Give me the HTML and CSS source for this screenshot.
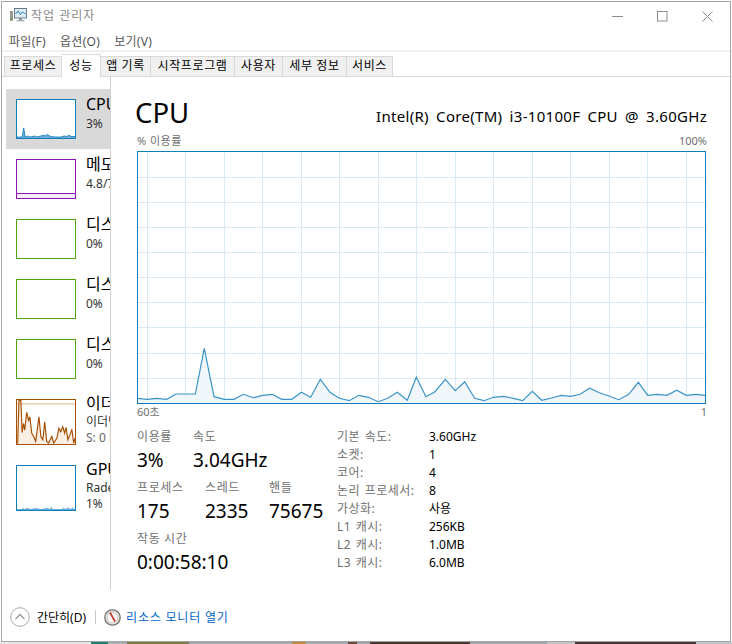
FILE: index.html
```html
<!DOCTYPE html>
<html lang="ko">

<head>
  <meta charset="UTF-8">
  <title>작업 관리자</title>
  <link rel="stylesheet" href="styles.css">
</head>

<body>
  <div class="window">
    <!-- Title bar -->
    <div class="titlebar">
      <svg class="app-icon" width="17" height="16" viewBox="0 0 17 16">
        <rect x="0.5" y="4.5" width="2" height="9" fill="#9a9a9a" stroke="#777" stroke-width="0.6" />
        <rect x="0.8" y="11" width="1.5" height="2" fill="#5aa845" />
        <rect x="4.5" y="1.5" width="12" height="9.5" fill="#dcecf6" stroke="#6c7a85" />
        <polyline points="5.5,7 8,4 10.5,7.5 12.5,5 15.5,7" fill="none" stroke="#2b7fbf" />
        <rect x="9" y="11" width="3" height="2" fill="#8a8f94" />
        <rect x="6.5" y="13" width="8" height="1.4" fill="#a8adb2" />
      </svg>
      <span class="title-text">작업 관리자</span>
      <div class="win-buttons">
        <svg width="11" height="11" viewBox="0 0 11 11"><path d="M0 5.5H11" stroke="#8c8c8c" /></svg>
        <svg width="11" height="11" viewBox="0 0 11 11"><rect x="0.5" y="0.5" width="9.5" height="9.5" fill="none" stroke="#8c8c8c" /></svg>
        <svg width="11" height="11" viewBox="0 0 11 11"><path d="M0.5 0.5L10.5 10.5M10.5 0.5L0.5 10.5" stroke="#8c8c8c" /></svg>
      </div>
    </div>

    <!-- Menu -->
    <div class="menubar">
      <span>파일(F)</span>
      <span>옵션(O)</span>
      <span>보기(V)</span>
    </div>

    <!-- Tabs -->
    <div class="tabs">
      <div class="tab tab-w58">프로세스</div>
      <div class="tab tab-w39 active">성능</div>
      <div class="tab tab-w50">앱 기록</div>
      <div class="tab tab-w84">시작프로그램</div>
      <div class="tab tab-w48">사용자</div>
      <div class="tab tab-w64">세부 정보</div>
      <div class="tab tab-w46">서비스</div>
    </div>

    <div class="content">
      <!-- Left list -->
      <div class="sidebar">
        <div class="item selected">
          <svg class="thumb cpu" viewBox="0 0 58 38" preserveAspectRatio="none">
            <polygon points="0,37 5,37 6.7,28 8.3,37 11,36 13,37 18,36 20,37 24,36 26,35 28,36 30,34.5 32,35.5 34,36.5 38,37 44,37 47,36 50,36.5 52,35 54,36.5 58,36.5 58,38 0,38" />
            <polyline points="0,37 5,37 6.7,28 8.3,37 11,36 13,37 18,36 20,37 24,36 26,35 28,36 30,34.5 32,35.5 34,36.5 38,37 44,37 47,36 50,36.5 52,35 54,36.5 58,36.5" />
          </svg>
          <div class="item-text">
            <div class="item-name">CPU</div>
            <div class="item-sub gap">3% 3.04</div>
          </div>
        </div>
        <div class="item">
          <svg class="thumb memory" viewBox="0 0 58 38" preserveAspectRatio="none">
            <rect class="fill-memory" x="0" y="33" width="58" height="5" />
            <path d="M0 33.5H58" />
          </svg>
          <div class="item-text">
            <div class="item-name">메모리</div>
            <div class="item-sub">4.8/7.9GB</div>
          </div>
        </div>
        <div class="item">
          <svg class="thumb disk" viewBox="0 0 58 38"></svg>
          <div class="item-text">
            <div class="item-name">디스크 0</div>
            <div class="item-sub">0%</div>
          </div>
        </div>
        <div class="item">
          <svg class="thumb disk" viewBox="0 0 58 38"></svg>
          <div class="item-text">
            <div class="item-name">디스크 1</div>
            <div class="item-sub">0%</div>
          </div>
        </div>
        <div class="item">
          <svg class="thumb disk" viewBox="0 0 58 38"></svg>
          <div class="item-text">
            <div class="item-name">디스크 2</div>
            <div class="item-sub">0%</div>
          </div>
        </div>
        <div class="item tall">
          <svg class="thumb net" viewBox="0 0 60 45" preserveAspectRatio="none">
            <polygon class="fill-net" points="0.7,44.7 2,0.7 4,0.7 5.3,33.3 6.7,24 8,30.7 10,12.7 12,20.7 13.3,17.3 15.3,34 17.3,37.3 19.3,42.3 20.7,32.3 22.7,17.3 24.7,37.3 26.7,40.7 28.7,22.3 30.7,42.3 32.7,44 36,37.3 38,44 41.3,39 43.3,29 45.3,32.3 47.3,27.3 49.3,34 50.7,28 52.7,40.7 54.7,35.7 56.7,30 58.7,44 60,39 60,45 0,45" />
            <path class="net-limit" d="M0 4H60" />
            <polyline points="0.7,44.7 2,0.7 4,0.7 5.3,33.3 6.7,24 8,30.7 10,12.7 12,20.7 13.3,17.3 15.3,34 17.3,37.3 19.3,42.3 20.7,32.3 22.7,17.3 24.7,37.3 26.7,40.7 28.7,22.3 30.7,42.3 32.7,44 36,37.3 38,44 41.3,39 43.3,29 45.3,32.3 47.3,27.3 49.3,34 50.7,28 52.7,40.7 54.7,35.7 56.7,30 58.7,44 60,39" />
          </svg>
          <div class="item-text">
            <div class="item-name">이더넷</div>
            <div class="item-sub">이더넷</div>
            <div class="item-sub muted">S: 0 R: 0</div>
          </div>
        </div>
        <div class="item tall">
          <svg class="thumb cpu" viewBox="0 0 58 44" preserveAspectRatio="none">
            <polygon points="0,43 5,43 6,41.5 7,43 10,42 14,43 18,42 24,43 30,42 33,43 34,41 36,43 45,43 47,41.5 48,43 52,41.5 53,43 56,41.5 57,43 58,43 58,44 0,44" />
          </svg>
          <div class="item-text">
            <div class="item-name">GPU 0</div>
            <div class="item-sub">Radeon</div>
            <div class="item-sub">1%</div>
          </div>
        </div>
      </div>

      <!-- Performance panel -->
      <div class="panel">
        <div class="panel-head">
          <div class="panel-title">CPU</div>
          <div class="panel-model">Intel(R) Core(TM) i3-10100F CPU @ 3.60GHz</div>
        </div>
        <div class="axis-labels axis-top">
          <span class="axis-name">% 이용률</span>
          <span>100%</span>
        </div>

        <svg class="chart" width="569" height="253" viewBox="137 151 569 253">
          <g class="grid">
            <path d="M137 177.5H705M137 202.5H705M137 227.5H705M137 252.5H705M137 277.5H705M137 302.5H705M137 327.5H705M137 353.5H705M137 378.5H705" />
            <path d="M147.5 152V403M185.5 152V403M224.5 152V403M262.5 152V403M301.5 152V403M339.5 152V403M378.5 152V403M416.5 152V403M455.5 152V403M493.5 152V403M532.5 152V403M570.5 152V403M609.5 152V403M647.5 152V403M686.5 152V403" />
          </g>
          <polygon class="line-fill" points="137.3,398.3 147.3,399.3 156.7,398.3 166.7,399.3 176,394 195.3,394 204.3,348.3 214,396.7 224.3,399.3 234,399.3 243.3,394.3 253.3,397.7 262.7,395.3 272.3,394.3 281.7,399.3 291.7,399.3 301.3,392.3 310.7,397.3 320.3,379.3 330,392.3 339.3,398.3 349.3,400.7 358.7,395.3 368.3,397.3 378.3,401.7 387.7,398.3 397.3,392.3 407.3,400.3 416.3,377.3 426,396.7 435,391.7 445.3,379.3 455.3,390.7 464.7,381.7 474.7,398.3 484,400.7 493.3,397.3 503.3,396.3 513.3,398.3 522.7,400.7 532.3,391.3 541.7,400.3 551.7,398 561,395.3 570.7,396.3 580,394.3 589.7,388.3 599.3,392.7 609,396 618.7,399.7 628.7,394.3 638.3,382.3 647.7,395.3 657.3,394.3 667,395.3 676.7,390.3 686.3,395.3 696,394.3 705.3,395.3 705.3,403 137.3,403" />
          <polyline class="line" points="137.3,398.3 147.3,399.3 156.7,398.3 166.7,399.3 176,394 195.3,394 204.3,348.3 214,396.7 224.3,399.3 234,399.3 243.3,394.3 253.3,397.7 262.7,395.3 272.3,394.3 281.7,399.3 291.7,399.3 301.3,392.3 310.7,397.3 320.3,379.3 330,392.3 339.3,398.3 349.3,400.7 358.7,395.3 368.3,397.3 378.3,401.7 387.7,398.3 397.3,392.3 407.3,400.3 416.3,377.3 426,396.7 435,391.7 445.3,379.3 455.3,390.7 464.7,381.7 474.7,398.3 484,400.7 493.3,397.3 503.3,396.3 513.3,398.3 522.7,400.7 532.3,391.3 541.7,400.3 551.7,398 561,395.3 570.7,396.3 580,394.3 589.7,388.3 599.3,392.7 609,396 618.7,399.7 628.7,394.3 638.3,382.3 647.7,395.3 657.3,394.3 667,395.3 676.7,390.3 686.3,395.3 696,394.3 705.3,395.3" />
          <rect class="frame" x="137.5" y="151.5" width="568" height="252" />
        </svg>

        <div class="axis-labels axis-bottom">
          <span>60초</span>
          <span>1</span>
        </div>

        <div class="stats">
          <div class="stats-left">
            <div class="stat-row">
              <div class="stat stat-w56"><div class="stat-label">이용률</div><div class="stat-value">3%</div></div>
              <div class="stat"><div class="stat-label">속도</div><div class="stat-value">3.04GHz</div></div>
            </div>
            <div class="stat-row">
              <div class="stat stat-w68"><div class="stat-label">프로세스</div><div class="stat-value">175</div></div>
              <div class="stat stat-w64"><div class="stat-label">스레드</div><div class="stat-value">2335</div></div>
              <div class="stat"><div class="stat-label">핸들</div><div class="stat-value">75675</div></div>
            </div>
            <div class="stat-row">
              <div class="stat"><div class="stat-label">작동 시간</div><div class="stat-value">0:00:58:10</div></div>
            </div>
          </div>
          <div class="specs">
            <span class="spec-key">기본 속도:</span><span>3.60GHz</span>
            <span class="spec-key">소켓:</span><span>1</span>
            <span class="spec-key">코어:</span><span>4</span>
            <span class="spec-key">논리 프로세서:</span><span>8</span>
            <span class="spec-key">가상화:</span><span>사용</span>
            <span class="spec-key">L1 캐시:</span><span>256KB</span>
            <span class="spec-key">L2 캐시:</span><span>1.0MB</span>
            <span class="spec-key">L3 캐시:</span><span>6.0MB</span>
          </div>
        </div>
      </div>
    </div>

    <!-- Footer -->
    <div class="footer">
      <svg class="less-icon" width="20" height="20" viewBox="0 0 20 20">
        <circle cx="10" cy="10" r="9.3" fill="#fff" stroke="#a8a8a8" />
        <polyline points="5.5,12 10,7.5 14.5,12" fill="none" stroke="#9a9a9a" stroke-width="1.3" />
      </svg>
      <span class="less-text">간단히(D)</span>
      <span class="footer-sep"></span>
      <svg class="monitor-icon" width="17" height="17" viewBox="0 0 17 17">
        <circle cx="8.5" cy="8.5" r="7.7" fill="#e8e6e2" stroke="#77716b" stroke-width="1.3" />
        <circle cx="8.5" cy="8.5" r="5.3" fill="#fbfaf8" stroke="#b5b0a8" stroke-width="0.6" />
        <path d="M6 3.5L11 12.5" stroke="#c0392b" stroke-width="1.7" />
      </svg>
      <span class="monitor-link">리소스 모니터 열기</span>
    </div>
  </div>

  <!-- Bit of desktop under the window -->
  <div class="desktop">
    <span class="d1"></span><span class="d2"></span><span class="d3"></span><span class="d4"></span><span class="d5"></span><span class="d6"></span><span class="d7"></span><span class="d8"></span><span class="d9"></span><span class="d10"></span><span class="d11"></span><span class="d12"></span><span class="d13"></span><span class="d14"></span>
  </div>
</body>

</html>
```

FILE: styles.css
```css
* {
  box-sizing: border-box;
}

html,
body {
  margin: 0;
  height: 644px;
  overflow: hidden;
}

body {
  font-family: "Noto Sans", "Noto Sans CJK KR", sans-serif;
  background: #fff;
  color: #000;
}

.window {
  width: 730px;
  height: 641px;
  margin: 1px 0 0 1px;
  border: 1px solid #a6a6a6;
  background: #fff;
  display: flex;
  flex-direction: column;
}

.titlebar {
  height: 26px;
  display: flex;
  align-items: center;
  padding-left: 8px;
  flex: none;
}

.app-icon {
  margin-right: 4px;
}

.title-text {
  font-size: 12px;
  color: #8a8a8a;
  letter-spacing: 1px;
}

.win-buttons {
  margin: 2px 0 0 auto;
  display: flex;
  gap: 34px;
  padding-right: 17px;
}

.menubar {
  height: 24px;
  display: flex;
  gap: 14px;
  align-items: center;
  padding: 3px 0 0 7px;
  font-size: 12px;
  letter-spacing: 0.3px;
  color: #555;
  border-bottom: 2px solid #f0f0f0;
  flex: none;
}

.tabs {
  height: 25px;
  display: flex;
  align-items: flex-end;
  padding-left: 2px;
  border-bottom: 1px solid #d9d9d9;
  flex: none;
}

.tab {
  height: 20px;
  font-size: 12px;
  letter-spacing: 0.6px;
  line-height: 18px;
  text-align: center;
  background: #f0f0f0;
  border: 1px solid #d9d9d9;
  border-bottom: none;
  border-left: none;
}

.tab:first-child {
  border-left: 1px solid #d9d9d9;
}

.tab.active {
  height: 23px;
  background: #fff;
  line-height: 21px;
  margin-bottom: -1px;
  position: relative;
}

.tab-w58 { width: 58px; }
.tab-w39 { width: 39px; }
.tab-w50 { width: 50px; }
.tab-w84 { width: 84px; }
.tab-w48 { width: 48px; }
.tab-w64 { width: 64px; }
.tab-w46 { width: 46px; }

.content {
  flex: 1;
  display: flex;
  min-height: 0;
}

.sidebar {
  width: 109px;
  height: 513px;
  padding: 12px 0 0 4px;
  border-right: 1px solid #d0d0d0;
  flex: none;
  overflow: hidden;
}

.item {
  height: 60px;
  width: 104px;
  padding: 10px 0 0 10px;
  display: flex;
  gap: 10px;
  overflow: hidden;
}

.item.tall {
  height: 66px;
}

.item.selected {
  background: #d9d9d9;
}

.thumb {
  width: 60px;
  height: 40px;
  flex: none;
  background: #fff;
  border: 1px solid;
}

.tall .thumb {
  height: 46px;
}

.thumb.cpu { border-color: #117dbb; }
.thumb.memory { border-color: #8b12ae; }
.thumb.disk { border-color: #4da60c; }
.thumb.net { border-color: #a74f01; }

.cpu polyline { fill: none; stroke: #117dbb; stroke-width: 0.8; }
.cpu polygon { fill: #6aaed8; }
.memory path { stroke: #8b12ae; stroke-width: 1; }
.fill-memory { fill: #f6ecf9; }
.net polyline { fill: none; stroke: #a74f01; stroke-width: 1.2; }
.fill-net { fill: #fbeee3; }
.net-limit { stroke: #dcae85; stroke-width: 1; }

.item-text {
  white-space: nowrap;
  flex: none;
  margin-top: -6px;
}

.item-name {
  font-size: 16px;
  line-height: 23px;
}

.item-sub {
  font-size: 12px;
  line-height: 15px;
  color: #333;
}

.tall .item-name {
  line-height: 21px;
}

.tall .item-sub {
  line-height: 16px;
}

.item-sub.gap {
  word-spacing: 5px;
}

.item-sub.muted {
  color: #666;
}

.panel {
  flex: 1;
  padding: 0 23px 0 26px;
  min-width: 0;
}

.panel-head {
  height: 53px;
  display: flex;
  justify-content: space-between;
  align-items: flex-end;
}

.panel-title {
  font-size: 27.5px;
  line-height: 36px;
  margin: 0 0 -1px -2px;
}

.panel-model {
  font-size: 15px;
  letter-spacing: 0.3px;
  word-spacing: 3px;
  line-height: 20px;
  margin-bottom: 4px;
  white-space: nowrap;
}

.axis-labels {
  display: flex;
  justify-content: space-between;
  font-size: 11px;
  color: #707070;
}

.axis-name {
  letter-spacing: 0.5px;
}

.axis-top {
  height: 21px;
  line-height: 21px;
}

.axis-bottom {
  height: 16px;
  line-height: 16px;
}

.chart {
  display: block;
}

.grid path {
  fill: none;
  stroke: #d9eaf4;
  stroke-width: 1;
}

.line {
  fill: none;
  stroke: #3a93c8;
  stroke-width: 1.2;
}

.line-fill {
  fill: #f1f6fa;
}

.frame {
  fill: none;
  stroke: #117dbb;
  stroke-width: 1;
}

.stats {
  display: flex;
  margin-top: 8px;
}

.stats-left {
  width: 200px;
  flex: none;
}

.stat-row {
  display: flex;
  height: 51px;
}

.stat {
  flex: none;
}

.stat-w56 { width: 56px; }
.stat-w68 { width: 68px; }
.stat-w64 { width: 64px; }

.stat-label {
  font-size: 12px;
  letter-spacing: 0.6px;
  line-height: 18px;
  margin-bottom: 2px;
  color: #707070;
}

.stat-value {
  font-size: 19px;
  line-height: 24px;
  white-space: nowrap;
}

.specs {
  display: grid;
  grid-template-columns: 92px auto;
  grid-auto-rows: 18px;
  font-size: 12px;
  line-height: 18px;
}

.spec-key {
  color: #707070;
  letter-spacing: 0.5px;
  word-spacing: 1px;
  white-space: nowrap;
}

.footer {
  height: 50px;
  display: flex;
  align-items: center;
  padding: 2px 0 0 8px;
  flex: none;
  font-size: 12px;
}

.less-text {
  margin-left: 7px;
}

.footer-sep {
  width: 1px;
  height: 14px;
  background: #c8c8c8;
  margin: 0 8px 0 9px;
}

.monitor-icon {
  margin-right: 5px;
}

.monitor-link {
  color: #0066cc;
  letter-spacing: 0.8px;
}

.desktop {
  height: 2px;
  display: flex;
  background: #b0b0b0;
}

.desktop span { display: block; height: 2px; }
.d1 { width: 91px; background: #e6e6e6; }
.d2 { width: 17px; background: #1f7d6b; }
.d3 { width: 19px; background: #a8b0b4; }
.d4 { width: 62px; background: #7d7a45; }
.d5 { width: 103px; background: #a3abaf; }
.d6 { width: 14px; background: #c08a3a; }
.d7 { width: 42px; background: #a3abaf; }
.d8 { width: 9px; background: #6a4a3a; }
.d9 { width: 13px; background: #a0a8ae; }
.d10 { width: 100px; background: #4a362c; }
.d11 { width: 77px; background: #a0a8ae; }
.d12 { width: 28px; background: #c5c5c5; }
.d13 { width: 121px; background: #4a3a36; }
.d14 { width: 36px; background: #c0c4c8; }
```
